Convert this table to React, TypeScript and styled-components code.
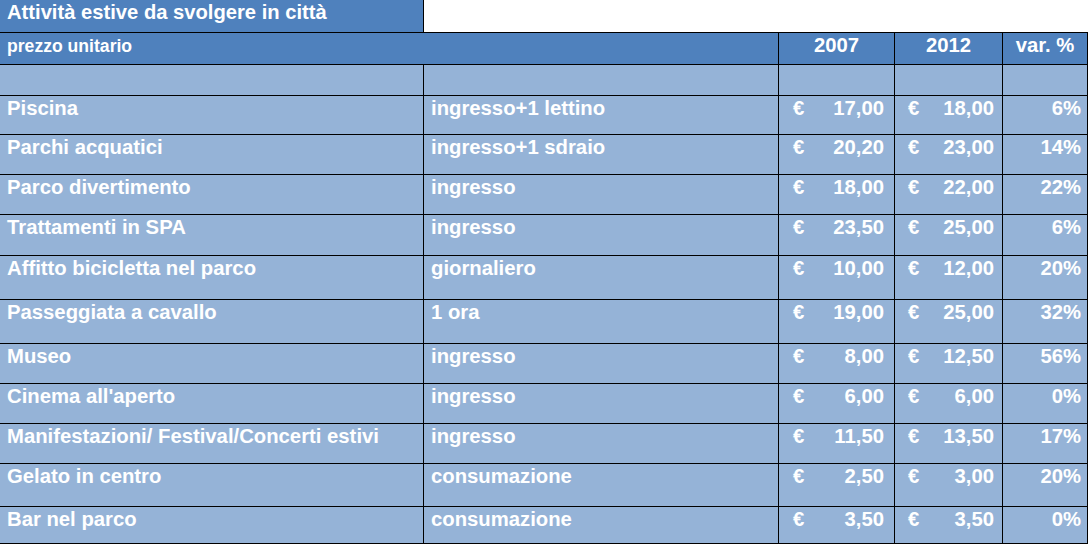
import React from "react";
import styled, { createGlobalStyle } from "styled-components";

const GlobalStyle = createGlobalStyle`
  html, body {
    margin: 0;
    padding: 0;
    background: #ffffff;
  }
  body {
    font-family: "Liberation Sans", Arial, sans-serif;
    overflow: hidden;
  }
`;

const DARK = "#4f81bd";
const LIGHT = "#95b3d7";
const COLS = "424px 355px 116px 108px 85px";

const Sheet = styled.div`
  width: 1088px;
  display: flex;
  flex-direction: column;
`;

const TitleBar = styled.div`
  display: grid;
  grid-template-columns: 424px 664px;
  height: 33px;
`;

const TitleCell = styled.div`
  box-sizing: border-box;
  background: ${DARK};
  border-right: 1px solid #000;
  border-bottom: 1px solid #000;
  color: #fff;
  font-weight: 700;
  font-size: 20.2px;
  line-height: 23px;
  padding: 1px 0 0 7px;
  white-space: nowrap;
`;

const TitleFiller = styled.div`
  box-sizing: border-box;
  border-bottom: 1px solid #000;
`;

const Row = styled.div<{ $h: number }>`
  display: grid;
  grid-template-columns: ${COLS};
  height: ${(p) => p.$h}px;
`;

const Cell = styled.div<{
  $dark?: boolean;
  $span?: number;
  $align?: "left" | "center" | "right";
  $pl?: number;
  $pr?: number;
  $small?: boolean;
}>`
  box-sizing: border-box;
  grid-column: span ${(p) => p.$span ?? 1};
  background: ${(p) => (p.$dark ? DARK : LIGHT)};
  border-right: 1px solid #000;
  border-bottom: 1px solid #000;
  color: #fff;
  font-weight: 700;
  font-size: ${(p) => (p.$small ? "17.6px" : "20.3px")};
  line-height: ${(p) => (p.$small ? "20px" : "23px")};
  padding-top: ${(p) => (p.$small ? "3px" : "1px")};
  padding-left: ${(p) => p.$pl ?? 0}px;
  padding-right: ${(p) => p.$pr ?? 0}px;
  text-align: ${(p) => p.$align ?? "left"};
  white-space: nowrap;
  overflow: hidden;
`;

const Money = styled(Cell)`
  display: flex;
  justify-content: space-between;
  align-items: flex-start;
`;

type Item = {
  name: string;
  unit: string;
  y2007: string;
  y2012: string;
  varp: string;
  h: number;
};

const items: Item[] = [
  { name: "Piscina", unit: "ingresso+1 lettino", y2007: "17,00", y2012: "18,00", varp: "6%", h: 39 },
  { name: "Parchi acquatici", unit: "ingresso+1 sdraio", y2007: "20,20", y2012: "23,00", varp: "14%", h: 40 },
  { name: "Parco divertimento", unit: "ingresso", y2007: "18,00", y2012: "22,00", varp: "22%", h: 40 },
  { name: "Trattamenti in SPA", unit: "ingresso", y2007: "23,50", y2012: "25,00", varp: "6%", h: 41 },
  { name: "Affitto bicicletta nel parco", unit: "giornaliero", y2007: "10,00", y2012: "12,00", varp: "20%", h: 44 },
  { name: "Passeggiata a cavallo", unit: "1 ora", y2007: "19,00", y2012: "25,00", varp: "32%", h: 44 },
  { name: "Museo", unit: "ingresso", y2007: "8,00", y2012: "12,50", varp: "56%", h: 40 },
  { name: "Cinema all'aperto", unit: "ingresso", y2007: "6,00", y2012: "6,00", varp: "0%", h: 40 },
  { name: "Manifestazioni/ Festival/Concerti estivi", unit: "ingresso", y2007: "11,50", y2012: "13,50", varp: "17%", h: 40 },
  { name: "Gelato in centro", unit: "consumazione", y2007: "2,50", y2012: "3,00", varp: "20%", h: 43 },
  { name: "Bar nel parco", unit: "consumazione", y2007: "3,50", y2012: "3,50", varp: "0%", h: 37 },
];

export default function App() {
  return (
    <Sheet>
      <GlobalStyle />
      <TitleBar>
        <TitleCell>Attività estive da svolgere in città</TitleCell>
        <TitleFiller />
      </TitleBar>

      <Row $h={32}>
        <Cell $dark $span={2} $small $pl={7}>
          prezzo unitario
        </Cell>
        <Cell $dark $align="center">2007</Cell>
        <Cell $dark $align="center">2012</Cell>
        <Cell $dark $align="center">var. %</Cell>
      </Row>

      <Row $h={31}>
        <Cell />
        <Cell />
        <Cell />
        <Cell />
        <Cell />
      </Row>

      {items.map((it) => (
        <Row key={it.name} $h={it.h}>
          <Cell $pl={7}>{it.name}</Cell>
          <Cell $pl={7}>{it.unit}</Cell>
          <Money $pl={14} $pr={10}>
            <span>€</span>
            <span>{it.y2007}</span>
          </Money>
          <Money $pl={13} $pr={8}>
            <span>€</span>
            <span>{it.y2012}</span>
          </Money>
          <Cell $align="right" $pr={6}>
            {it.varp}
          </Cell>
        </Row>
      ))}
    </Sheet>
  );
}
